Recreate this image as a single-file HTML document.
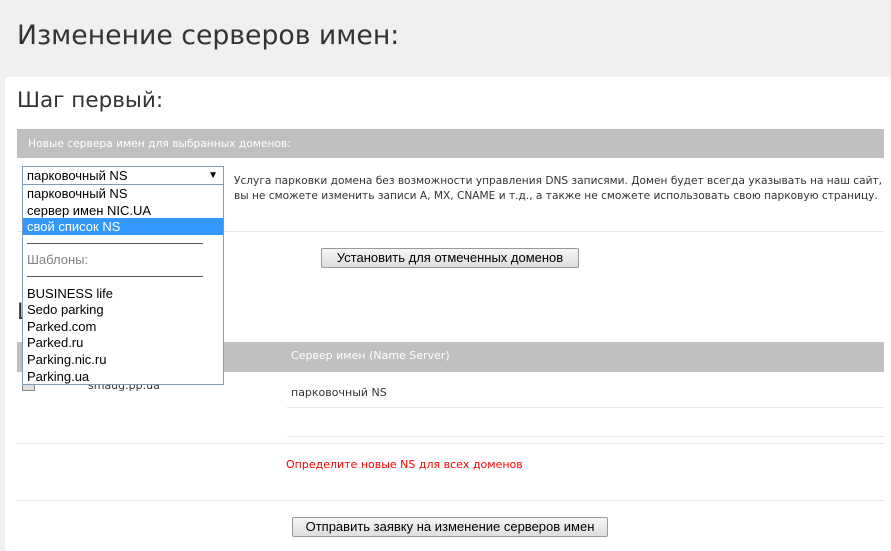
<!DOCTYPE html>
<html><head><meta charset="utf-8"><style>
body{margin:0;width:891px;height:551px;background:#f0f0f0;font-family:"DejaVu Sans","Liberation Sans",sans-serif;overflow:hidden;position:relative;color:#333}
.a{position:absolute;white-space:nowrap}
.panel{position:absolute;left:5px;top:77px;width:886px;height:474px;background:#fff;border-radius:4px}
.bar{position:absolute;background:#c0c0c0;color:#fff;font-size:11px}
.line{position:absolute;height:1px;background:#e6e6e6}
.btn{position:absolute;border:1px solid #999;border-radius:2px;background:linear-gradient(#f6f6f6,#dedede);font-family:"Liberation Sans",sans-serif;font-size:13px;color:#000;text-align:center;line-height:18px;box-sizing:border-box}
.dd{position:absolute;left:22px;top:185px;width:202px;height:200px;box-sizing:border-box;border:1px solid #7f9db9;border-top:none;background:#fff;font-family:"Liberation Sans",sans-serif;font-size:13px;color:#000}
.dd div{height:16.6px;line-height:17px;padding-left:4px}
</style></head><body>
<div class="a" style="left:17px;top:20px;font-size:26.7px;color:#333">Изменение серверов имен:</div>
<div class="panel"></div>
<div class="a" style="left:17px;top:88px;font-size:21.5px;color:#333">Шаг первый:</div>
<div class="bar" style="left:17px;top:129px;width:867px;height:29px;line-height:29px;padding-left:11px;box-sizing:border-box;font-size:10.7px">Новые сервера имен для выбранных доменов:</div>
<div class="a" style="left:22px;top:166px;width:202px;height:19px;box-sizing:border-box;border:1px solid #7f9db9;font-family:'Liberation Sans',sans-serif;font-size:13px;color:#000;line-height:17px;padding-left:4px">парковочный NS<span style="position:absolute;right:5px;font-size:10px">▼</span></div>
<div class="a" style="left:234px;top:174px;font-size:10.6px;line-height:15px;color:#333">Услуга парковки домена без возможности управления DNS записями. Домен будет всегда указывать на наш сайт,<br>вы не сможете изменить записи A, MX, CNAME и т.д., а также не сможете использовать свою парковую страницу.</div>
<div class="line" style="left:17px;top:231px;width:867px"></div>
<div class="btn" style="left:321px;top:248px;width:258px;height:20px">Установить для отмеченных доменов</div>
<div class="a" style="left:17px;top:300px;font-size:22px">Шаг второй:</div>
<div class="bar" style="left:17px;top:342px;width:867px;height:30px"></div>
<div class="a" style="left:291px;top:349px;font-size:11px;color:#fff">Сервер имен (Name Server)</div>
<div class="a" style="left:22px;top:380px;width:11px;height:9px;border:1px solid #888;background:#ddd"></div>
<div class="a" style="left:88px;top:379px;font-size:11px">smaug.pp.ua</div>
<div class="a" style="left:291px;top:386px;font-size:11px">парковочный NS</div>
<div class="line" style="left:287px;top:407px;width:597px"></div>
<div class="line" style="left:287px;top:436px;width:597px"></div>
<div class="line" style="left:17px;top:443px;width:867px"></div>
<div class="a" style="left:286px;top:458px;font-size:11px;color:#f00">Определите новые NS для всех доменов</div>
<div class="line" style="left:17px;top:500px;width:867px"></div>
<div class="btn" style="left:292px;top:517px;width:316px;height:20px">Отправить заявку на изменение серверов имен</div>
<div class="dd">
<div>парковочный NS</div>
<div>сервер имен NIC.UA</div>
<div style="background:#3399ff;color:#fff">свой список NS</div>
<div style="position:relative"><span style="position:absolute;left:4px;right:20px;top:8px;height:1px;background:#555"></span></div>
<div style="color:#808080">Шаблоны:</div>
<div style="position:relative"><span style="position:absolute;left:4px;right:20px;top:8px;height:1px;background:#555"></span></div>
<div>BUSINESS life</div>
<div>Sedo parking</div>
<div>Parked.com</div>
<div>Parked.ru</div>
<div>Parking.nic.ru</div>
<div>Parking.ua</div>
</div>
</body></html>
